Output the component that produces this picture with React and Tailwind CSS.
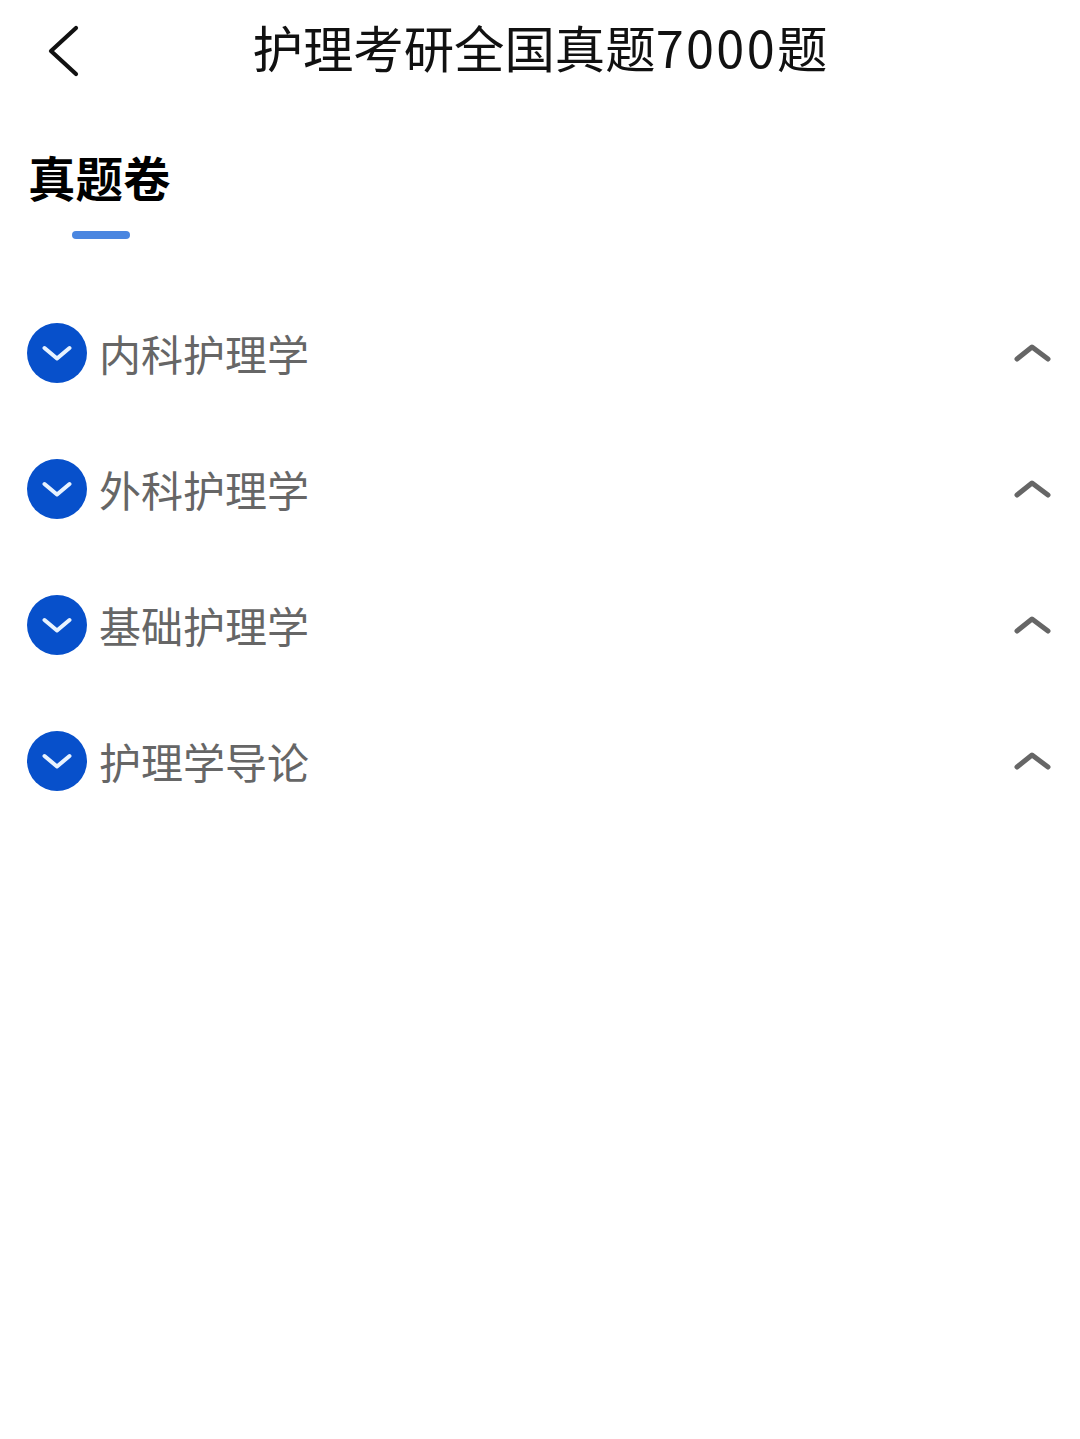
const font = { fontFamily: '"Noto Sans CJK SC", "Noto Sans", sans-serif' };

const items = ["内科护理学", "外科护理学", "基础护理学", "护理学导论"];

function Row({ label }) {
  return (
    <div className="flex h-[60px] items-center justify-between pl-[27px] pr-[28px]">
      <div className="flex items-center gap-[12px]">
        <div className="flex h-[60px] w-[60px] items-center justify-center rounded-full bg-[#0750cb]">
          <svg width="30" height="20" viewBox="0 0 30 20" fill="none">
            <path d="M2.5 5 L15 15.5 L27.5 5" stroke="#e8f3ff" strokeWidth="4" strokeLinecap="round" strokeLinejoin="round" />
          </svg>
        </div>
        <span className="text-[42px] leading-[60px] whitespace-nowrap text-[#666666]">{label}</span>
      </div>
      <svg width="40" height="24" viewBox="0 0 40 24" fill="none">
        <path d="M5 18 L20 6 L36 18" stroke="#666666" strokeWidth="5" strokeLinecap="round" strokeLinejoin="round" />
      </svg>
    </div>
  );
}

export default function App() {
  return (
    <div className="h-[1439px] w-[1080px] overflow-hidden bg-white" style={font}>
      <header className="grid h-[100px] grid-cols-[1fr_auto_1fr] items-center">
        <div className="pl-[46px]">
          <svg width="36" height="56" viewBox="0 0 36 56" fill="none" className="block">
            <path d="M30 6 L5 29 L30 52" stroke="#111111" strokeWidth="4.2" strokeLinecap="round" strokeLinejoin="round" />
          </svg>
        </div>
        <h1 className="mb-[6px] text-[50.4px] leading-[60px] font-normal whitespace-nowrap text-[#111111]">
          护理考研全国真题<span className="tracking-[2.4px]">7000</span>题
        </h1>
        <div />
      </header>
      <section className="mt-[47px] pl-[28px]">
        <h2 className="text-[47.5px] leading-[60px] font-bold text-black">真题卷</h2>
        <div className="mt-[24px] ml-[44px] h-[8px] w-[58px] rounded-full bg-[#4a86e0]" />
      </section>
      <div className="mt-[84px] flex flex-col gap-[76px]">
        {items.map((t) => (
          <Row key={t} label={t} />
        ))}
      </div>
    </div>
  );
}
